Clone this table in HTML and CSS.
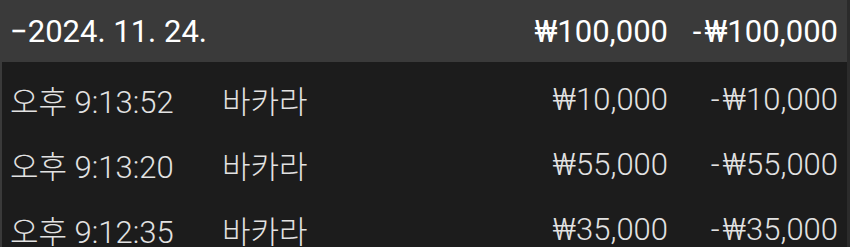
FILE: index.html
```html
<!DOCTYPE html>
<html lang="ko">
<head>
    <meta charset="UTF-8">
    <meta name="viewport" content="width=device-width, initial-scale=1.0">
    <title>게임 내역</title>
    <link rel="stylesheet" href="styles.css">
</head>
<body>
    <div class="history">
        <div class="day-header">
            <span class="day-date">&minus;2024. 11. 24.</span>
            <span class="amount bet">₩100,000</span>
            <span class="amount result"><span class="sign">-</span>₩100,000</span>
        </div>

        <div class="entries">
            <div class="entry">
                <span class="entry-time">오후 9:13:52</span>
                <span class="entry-game">바카라</span>
                <span class="amount bet">₩10,000</span>
                <span class="amount result"><span class="sign">-</span>₩10,000</span>
            </div>
            <div class="entry">
                <span class="entry-time">오후 9:13:20</span>
                <span class="entry-game">바카라</span>
                <span class="amount bet">₩55,000</span>
                <span class="amount result"><span class="sign">-</span>₩55,000</span>
            </div>
            <div class="entry">
                <span class="entry-time">오후 9:12:35</span>
                <span class="entry-game">바카라</span>
                <span class="amount bet">₩35,000</span>
                <span class="amount result"><span class="sign">-</span>₩35,000</span>
            </div>
        </div>
    </div>
</body>
</html>
```

FILE: styles.css
```css
body {
    margin: 0;
    background-color: #1c1c1c;
    font-family: Roboto, "Noto Sans CJK KR", sans-serif;
    font-size: 31px;
    overflow: hidden;
}

.history {
    width: 850px;
    height: 247px;
    border-right: 3px solid #2b2b2b;
    box-sizing: border-box;
}

.day-header,
.entry {
    display: grid;
    grid-template-columns: 212px 1fr 170px 170px;
    align-items: center;
    padding: 0 9px 0 10px;
}

.day-header {
    height: 62px;
    background-color: #3a3a3a;
    color: #ffffff;
}

.day-date {
    grid-column: 1 / 3;
}

.entries {
    padding-top: 5px;
    border-left: 2px solid #3a3a3a;
}

.entry {
    height: 65px;
    color: #e2e2e2;
    font-weight: 300;
    padding-left: 8px;
}

.amount {
    text-align: right;
}

.sign {
    margin-right: 3px;
}
```
